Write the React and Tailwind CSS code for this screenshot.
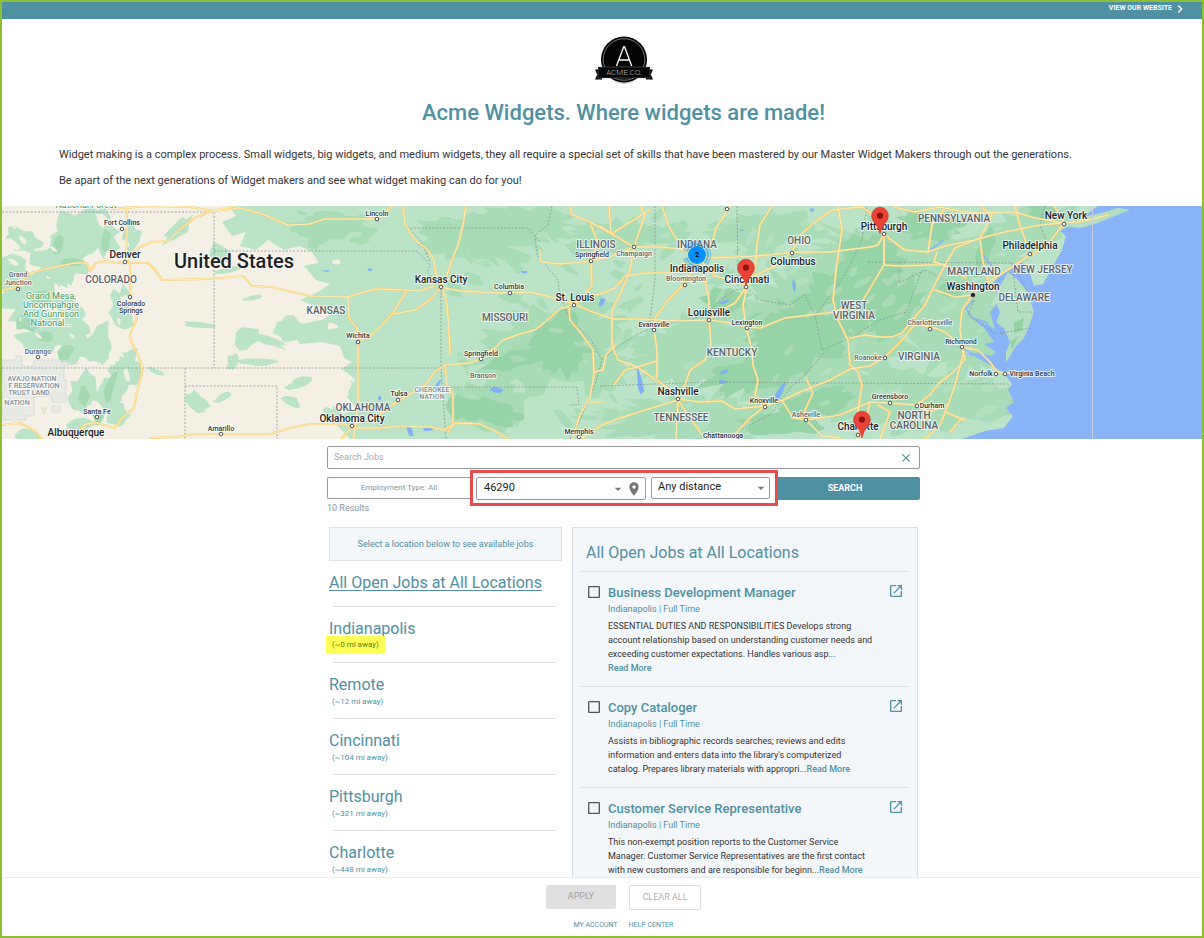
import React from "react";
import { MdOpenInNew, MdLocationOn, MdClose, MdArrowDropDown, MdChevronRight, MdCheckBoxOutlineBlank } from "react-icons/md";

/* ---------- map data ---------- */

// Small deterministic generator so that the terrain is the same on every load.
function makeRandom(seed) {
  let s = seed;
  return () => {
    s = (s * 16807) % 2147483647;
    return s / 2147483647;
  };
}

function blobPath(cx, cy, rx, ry, angle, rnd) {
  const n = Math.max(9, Math.round((rx + ry) / 2.2));
  const a = (angle * Math.PI) / 180;
  let d = "";
  for (let i = 0; i < n; i++) {
    const t = (i / n) * Math.PI * 2;
    const k = 0.62 + rnd() * 0.5;
    const x = Math.cos(t) * rx * k;
    const y = Math.sin(t) * ry * k;
    const px = cx + x * Math.cos(a) - y * Math.sin(a);
    const py = cy + x * Math.sin(a) + y * Math.cos(a);
    d += (i ? "L" : "M") + px.toFixed(1) + " " + py.toFixed(1);
  }
  return d + "Z";
}

function scatter(seed, count, x0, y0, w, h, size, angle) {
  const rnd = makeRandom(seed);
  const out = [];
  for (let i = 0; i < count; i++) {
    const cx = x0 + rnd() * w;
    const cy = y0 + rnd() * h;
    const r = size * (0.4 + rnd());
    out.push(blobPath(cx, cy, r * 1.7, r * 0.7, angle + rnd() * 50 - 25, rnd));
  }
  return out.join("");
}

function blobs(seed, list) {
  const rnd = makeRandom(seed);
  return list.map(([cx, cy, rx, ry, a]) => blobPath(cx, cy, rx, ry, a || 0, rnd)).join("");
}

const PLAINS =
  "M228 206L236 216L222 222L232 236L246 232L240 246L256 250L268 240L284 250L300 246L312 252L318 262L304 266L316 280L330 284L318 292L300 300L314 306L334 312L322 320L300 324L292 334L300 344L322 342L340 346L344 358L352 362L340 370L352 384L346 396L356 408L344 414L330 404L322 410L336 424L350 439L1204 439L1204 206Z";

const WEST_GREEN = blobs(11, [
  [75, 235, 26, 30, 20], [62, 262, 34, 26, -20], [100, 232, 22, 26, 0], [36, 300, 34, 32, 10],
  [22, 240, 22, 12, 20], [62, 318, 32, 26, 40], [40, 340, 26, 14, 0], [122, 308, 14, 24, 0],
  [98, 345, 14, 24, 20], [125, 372, 16, 26, 20], [108, 395, 14, 26, 20], [82, 392, 14, 22, 10],
  [74, 345, 18, 22, 0], [118, 415, 12, 14, 0], [132, 238, 12, 14, 0], [14, 275, 16, 24, 0],
  [28, 436, 14, 8, 0], [80, 425, 14, 8, 0], [178, 230, 22, 8, -45], [198, 325, 18, 4, 6], [245, 336, 14, 14, 0],
  [232, 362, 6, 10, 20], [252, 298, 10, 3, -10], [198, 402, 16, 9, 40], [222, 398, 10, 4, -30],
  [266, 340, 24, 5, 20], [258, 362, 20, 5, 0], [300, 382, 16, 6, -20], [292, 402, 12, 6, 30],
  [155, 371, 10, 3, 20], [228, 270, 14, 3, -10], [218, 254, 14, 10, 30], [290, 330, 18, 14, 20],
]);
const WEST_DARK = blobs(23, [
  [58, 245, 8, 12, 0], [26, 322, 14, 10, 0], [44, 336, 10, 7, 0], [110, 388, 5, 20, 20], [72, 262, 12, 5, 0],
  [106, 240, 6, 12, 10], [84, 395, 6, 12, 0], [66, 352, 8, 12, 30], [98, 418, 6, 8, 0], [40, 296, 12, 8, 0],
]);
const EAST_MID = blobs(37, [
  [470, 240, 60, 26, 10], [520, 225, 60, 22, 0], [545, 345, 84, 42, -20], [490, 405, 46, 30, 0],
  [620, 235, 60, 16, 0], [700, 350, 80, 40, -10], [760, 230, 60, 22, 0], [820, 330, 130, 80, -20],
  [900, 260, 120, 46, 0], [960, 330, 60, 54, 0], [1030, 230, 50, 26, -20], [900, 400, 110, 34, 0],
  [690, 420, 110, 24, 0], [330, 225, 40, 14, 0], [990, 400, 34, 20, 0], [600, 370, 30, 30, 0],
]);
const EAST_DARK = blobs(53, [
  [560, 345, 36, 34, 0], [515, 360, 34, 10, -20], [490, 412, 38, 14, 10], [458, 405, 12, 14, 0],
  [800, 335, 66, 40, -20], [845, 300, 40, 40, 0], [870, 260, 36, 30, 0], [760, 372, 60, 20, -15],
  [930, 226, 36, 16, 0], [895, 310, 26, 40, 30], [812, 405, 50, 16, -15], [985, 250, 8, 26, 20], [725, 300, 26, 16, 0],
  [1045, 212, 20, 8, 0], [950, 290, 14, 10, 0], [780, 425, 44, 12, 0],
]);
const MID_TEXTURE =
  scatter(71, 50, 452, 210, 170, 220, 6, 30) + scatter(73, 70, 620, 210, 260, 220, 7, -30) + scatter(79, 14, 300, 212, 80, 40, 6, 0);
const LIGHT_TEXTURE = scatter(83, 90, 600, 210, 400, 224, 5, -35) + scatter(89, 24, 440, 210, 150, 220, 5, 20);
const BEIGE_TEXTURE =
  scatter(97, 40, 8, 212, 130, 200, 4, 60) + "M302 258L316 258L318 263L308 265Z" +
  blobs(99, [[308, 285, 10, 6, 10], [336, 262, 5, 3, 0], [332, 326, 6, 4, 0], [318, 352, 16, 7, 10], [336, 372, 20, 6, 30], [318, 398, 20, 8, 25], [342, 392, 10, 4, 30], [312, 430, 18, 8, 10]]);
const WATER_SPECKS = blobs(101, [
  [410, 432, 7, 3, 70], [428, 429, 6, 2, 0], [438, 384, 5, 2, -60], [498, 390, 8, 3, 10], [508, 318, 8, 2, -20], [524, 272, 4, 1.5, 0],
  [640, 382, 3, 16, -10], [602, 302, 3, 5, 30], [722, 382, 5, 2, 0], [724, 372, 5, 2, -20], [780, 392, 3, 11, 30], [794, 286, 2, 8, 0],
  [724, 302, 6, 2, -20], [370, 270, 3, 1.5, 0], [326, 271, 4, 1, 0], [812, 210, 3, 2, 0], [742, 230, 3, 1, 0], [380, 398, 2, 3, 0],
]);

const OCEAN =
  "M1098 206L1202 206L1202 439L962 439L985 431L1004 428L1013 416L1006 408L1014 402L1008 390L1012 384L1006 376L996 368L986 362L974 356L964 354L980 353L992 356L996 352L984 344L994 342L984 328L972 318L990 326L995 330L990 312L1000 300L992 284L1000 276L1012 268L1022 262L1028 268L1034 286L1043 284L1052 268L1062 250L1066 236L1060 231L1070 226Z";
const PENINSULA = "M1008 272L1016 278L1028 292L1032 306L1034 312L1030 324L1024 338L1016 346L1010 356L1006 362L1006 352L1010 342L1004 328L996 322L1000 312L994 298L1000 286Z";
const LONG_ISLAND = "M1064 226L1078 218L1098 214L1118 208L1130 210L1112 217L1098 223L1080 228Z";
const POTOMAC = "M974 300L966 308L972 318L986 322L994 334M982 254L992 266L1000 282M962 348L980 358L996 368M944 240L930 250";

const ROADS = [
  "127,206 127,235 126,260 130,262 130,297 137,318 130,335 131,341 141,362 142,373 137,392 134,408 122,418 115,428 97,423 85,424 74,438",
  "2,290 18,287 30,273 50,268 75,263 87,263 90,271 96,263 105,261 118,263 148,263 155,270 162,280 210,279 243,276 252,286 272,287 310,296 347,297 375,289 407,290 420,291 434,286",
  "130,257 140,247 152,242 168,241 180,229 195,218 212,211 235,206",
  "110,209 150,206 190,207 215,211 240,208 262,214 288,225 310,224 325,219 376,219 393,206",
  "2,425 20,423 35,431 42,439",
  "150,438 175,437 195,434 222,434 270,434 290,428 310,424 345,424 352,428 380,428 400,426 430,427 445,430 455,423 480,424 495,431 508,439",
  "403,206 405,224 415,240 428,250 434,260 436,275 441,287",
  "466,206 463,225 458,245 452,260 447,275 441,287 460,291 500,293 530,292 555,298 574,304",
  "441,287 430,300 415,310 393,314", "407,290 393,313 375,332 358,342",
  "348,297 349,318 357,328 358,342 358,400 356,424 353,439", "352,427 341,439",
  "443,290 447,305 449,330 450,355",
  "574,304 560,309 545,322 535,330 520,334 503,340 495,348 480,359 470,363 445,365 435,372 425,385 400,400 375,417 352,425",
  "445,365 447,385 453,395 453,425 448,432",
  "571,206 571,214 590,222 608,232", "591,225 598,243 591,261 592,285 586,293 574,304",
  "540,250 541,262 560,264 591,261 612,256 634,247 660,247 680,249 697,256 715,276 740,282 746,286",
  "569,308 570,320 580,332 593,350 594,375 590,397 580,415 572,439", "594,372 603,370 606,355 615,345", "590,402 602,402",
  "574,304 590,311 613,319 640,319 680,321 709,320 725,322 747,327 760,328 785,318 835,312 850,304",
  "576,303 590,296 603,293 615,288 625,276 645,273 670,273 697,258 740,257 770,255 792,252 830,252 870,247 878,245 884,234",
  "662,206 668,225 680,245 697,256", "728,210 716,228 713,240", "730,206 728,210",
  "600,226 612,234 634,247 630,270 622,290 612,310 612,345 618,360 637,367 657,361", "609,206 611,234 650,210", "640,206 645,215 634,247",
  "697,256 705,280 709,300 709,320 711,345 705,360 690,370 685,385 678,398",
  "747,286 743,305 746,327 752,350 753,365 758,380 755,395 765,406 750,418 735,434",
  "709,320 722,310 735,303 747,286 752,277 775,266 792,252 800,235 815,222 832,210 850,208 862,207 880,220",
  "772,206 760,225 757,245 755,270 747,286",
  "838,206 842,230 836,270 833,300 838,320 848,340 850,365 858,372 862,385 858,410 858,439",
  "850,338 865,335 880,337 892,337 902,333 925,305 935,284 945,265 955,248 980,238",
  "765,406 783,400 800,392 830,380 850,369 870,366 885,357 902,340 915,324 935,328 945,332 962,346",
  "678,399 700,402 722,401 735,409 765,406", "783,402 793,418 806,420 840,415 870,402 890,403 916,405 930,412 948,405",
  "806,378 813,393 805,410 806,420 822,436 840,438", "884,265 875,280 863,300", "884,234 884,265 900,266 930,265 945,265",
  "678,400 655,407 620,418 602,425 580,439", "678,400 676,439", "678,400 695,425 705,439",
  "654,330 657,350 657,378", "654,330 655,318 668,300 685,283 697,262", "614,385 625,370 637,367 668,388 678,398",
  "894,242 905,250 928,252 945,246 975,240 1000,233 1040,225 1064,223", "894,207 915,212 940,207 965,212 990,213 1015,212 1035,218 1064,223",
  "980,240 983,262 988,280", "937,252 934,262 945,265 966,278", "928,252 932,225 945,208",
  "1064,223 1055,235 1045,248 1030,255 1015,265 1000,275 988,282 974,293 962,310 960,330 962,346 965,360 950,375 940,382 930,395 916,405",
  "962,347 978,350 990,362 997,372 1010,373", "963,355 955,385 948,405 940,425 925,439", "1015,206 1020,225 1027,245",
  "935,290 955,297 974,295", "1064,223 1085,221 1108,215", "1054,206 1060,215 1064,223", "980,206 992,215 980,238",
  "945,412 965,420 962,418 950,432", "884,234 895,243 905,250", "870,402 866,420 858,439", "878,405 890,412 880,439",
];

const BORDERS = [
  "2,212 214,212 214,368", "214,251 417,251 430,265 427,272 441,287 441,370 446,439", "2,368 441,368",
  "185,368 185,439", "185,386 277,386 277,439", "407,228 528,228 540,242", "446,387 577,387 579,405 569,405",
  "552,206 548,225 535,235 537,255 558,280 560,295 570,320 590,338 602,360 595,385 580,420 570,439",
  "602,360 620,345 640,333 660,325 690,320 709,312 720,300 735,290 747,288 760,300 790,305 805,295 815,315 835,290 850,265 862,240 867,206",
  "655,206 655,280 650,320", "737,206 738,286", "868,262 1012,263 1018,312 1034,312",
  "600,386 710,382 830,383 1010,384", "899,262 899,283 925,270 945,280 968,292", "824,353 805,375 790,388 770,415 740,430",
  "815,315 822,350 850,338 880,320 906,312 922,270", "1012,263 1032,300", "403,206 405,224 420,240 430,262",
  "974,300 968,315 996,334 1030,328", "1045,206 1040,225 1050,250",
];

// [text, centre x, baseline y]
const BIG = [
  ["Denver", 125, 258], ["Kansas City", 441, 283], ["St. Louis", 575, 301], ["Oklahoma City", 352, 422], ["Albuquerque", 76, 436],
  ["Indianapolis", 697, 272], ["Columbus", 793, 265], ["Cincinnati", 747, 283], ["Louisville", 709, 316], ["Nashville", 678, 395],
  ["Pittsburgh", 884, 230], ["New York", 1066, 219], ["Philadelphia", 1030, 249], ["Washington", 973, 290], ["Charlotte", 858, 430],
];
const SMALL = [
  ["Fort Collins", 122, 225], ["Colorado", 131, 306], ["Springs", 131, 313], ["Lincoln", 377, 216], ["Columbia", 509, 289],
  ["Springfield", 592, 257], ["Wichita", 358, 338], ["Springfield", 481, 356], ["Tulsa", 399, 396], ["Memphis", 579, 434],
  ["Amarillo", 221, 431], ["Santa Fe", 97, 414], ["Evansville", 654, 327], ["Lexington", 747, 325], ["Knoxville", 764, 403],
  ["Chattanooga", 723, 438], ["Richmond", 961, 344], ["Virginia Beach", 1032, 376], ["Norfolk", 981, 376], ["Greensboro", 890, 399],
  ["Durham", 932, 408],
];
const FAINT = [
  ["Grand", 18, 277], ["Junction", 18, 285], ["Durango", 38, 354], ["Branson", 483, 378], ["Champaign", 634, 256],
  ["Bloomington", 686, 281], ["Roanoke", 868, 360], ["Asheville", 806, 417], ["Charlottesville", 930, 325],
];
const STATES = [
  ["COLORADO", 111, 283], ["KANSAS", 326, 314], ["MISSOURI", 505, 321], ["OKLAHOMA", 363, 411], ["ILLINOIS", 596, 248],
  ["INDIANA", 697, 248], ["OHIO", 799, 244], ["KENTUCKY", 732, 356], ["TENNESSEE", 681, 421], ["PENNSYLVANIA", 954, 222],
  ["MARYLAND", 974, 275], ["NEW JERSEY", 1043, 273], ["DELAWARE", 1024, 301], ["WEST", 854, 309], ["VIRGINIA", 854, 319],
  ["VIRGINIA", 919, 360], ["NORTH", 914, 419], ["CAROLINA", 914, 429],
];
const NATIONS = [
  ["AVAJO NATION", 32, 381], ["F RESERVATION", 34, 388], ["TRUST LAND", 29, 395], ["NATION", 17, 405], ["CHEROKEE", 432, 392], ["NATION", 432, 399],
];
const PARKS = [
  ["National Forest", 86, 208], ["Grand Mesa,", 51, 299], ["Uncompahgre", 51, 308], ["And Gunnison", 51, 317], ["National...", 51, 326],
];
const DOTS = [
  [122, 229], [125, 262], [18, 289], [130, 297], [38, 357], [97, 417], [76, 439], [221, 434], [377, 219], [441, 287], [510, 293], [574, 305],
  [591, 261], [358, 342], [481, 359], [398, 400], [352, 426], [579, 437], [634, 247], [685, 285], [792, 253], [746, 287], [709, 320],
  [654, 330], [747, 328], [678, 399], [765, 407], [806, 420], [884, 234], [858, 435], [727, 209], [1064, 224], [1030, 254], [930, 329],
  [962, 347], [996, 374], [1005, 374], [917, 406], [890, 403], [885, 358],
];

function Labels({ items, className }) {
  return (
    <g className={className} textAnchor="middle" stroke="#ffffff" strokeOpacity="0.75" strokeWidth="2" paintOrder="stroke" strokeLinejoin="round">
      {items.map(([t, x, y], i) => (
        <text key={i} x={x} y={y}>{t}</text>
      ))}
    </g>
  );
}

function Pin({ x, y }) {
  return (
    <g transform={`translate(${x} ${y})`}>
      <path d="M0 0C-1.4-5.2-2.6-8-5.4-11.2C-7.4-13.5-8.4-15.6-8.4-18.4A8.4 8.4 0 0 1 8.4-18.4C8.4-15.6 7.4-13.5 5.4-11.2C2.6-8 1.4-5.2 0 0Z" fill="#ea4335" stroke="#c5221f" strokeWidth="0.5" />
      <circle cx="0" cy="-18.4" r="3.1" fill="#8b1410" />
    </g>
  );
}

function JobsMap() {
  return (
    <svg viewBox="2 206 1200 233" preserveAspectRatio="xMidYMid slice" className="block h-[233px] w-full font-medium" role="img" aria-label="Map of job locations">
      <rect x="2" y="206" width="1200" height="233" fill="#f5f0e5" />
      <path d={PLAINS} fill="#bbe3c8" />
      <path d={WEST_GREEN} fill="#bbe3c8" />
      <path d={WEST_DARK} fill="#a4d9b4" />
      <path d={EAST_MID + MID_TEXTURE} fill="#a8dbb8" />
      <path d={EAST_DARK} fill="#97d3a9" />
      <path d={LIGHT_TEXTURE} fill="#bbe3c8" fillOpacity="0.5" />
      <path d={BEIGE_TEXTURE} fill="#f5f0e5" />
      <g fill="#dbe6e2" stroke="#cbd3d2" strokeWidth="0.6" fillOpacity="0.5">
        <path d="M2 360H16V356H22V366H34V360H68V366H64V380H66V402H52V396H34V416H26V420H2Z" />
        <path d="M42 408L47 408L44 414ZM52 406H60V412H52ZM66 428H88V434H66Z" />
      </g>
      <path d={WATER_SPECKS} fill="#7fb0f5" />
      <path d={OCEAN} fill="#8ab4f8" />
      <path d={PENINSULA + LONG_ISLAND} fill="#b4dfc2" />
      <path d="M1014 322L1024 318L1022 330L1014 334ZM1010 342L1018 336L1012 350Z" fill="#94d2a6" />
      <path d={POTOMAC} fill="none" stroke="#8ab4f8" strokeWidth="1.6" />
      <g fill="none" stroke="#84958f" strokeWidth="0.8" strokeDasharray="2 1.6">
        {BORDERS.map((p, i) => <polyline key={i} points={p} />)}
      </g>
      <g fill="none" stroke="#f7cf74" strokeWidth="2.2" strokeLinejoin="round" strokeLinecap="round">
        {ROADS.map((p, i) => <polyline key={i} points={p} />)}
      </g>
      <g fill="none" stroke="#ffeebb" strokeWidth="1" strokeLinejoin="round" strokeLinecap="round">
        {ROADS.map((p, i) => <polyline key={i} points={p} />)}
      </g>
      <path d="M1092.5 206V439" stroke="#c9cfe0" strokeWidth="1" />
      <g fill="#ffffff" stroke="#4d5156" strokeWidth="1">
        {DOTS.map(([x, y], i) => <circle key={i} cx={x} cy={y} r="1.8" />)}
      </g>
      <circle cx="973" cy="295" r="2.6" fill="#202124" stroke="#ffffff" strokeWidth="0.6" />
      <Labels items={PARKS} className="fill-[#3f9a5e] text-[9px] font-normal" />
      <Labels items={STATES} className="fill-[#5b6166] text-[10px]" />
      <Labels items={NATIONS} className="fill-[#858b90] text-[7px]" />
      <Labels items={FAINT} className="fill-[#5f6368] text-[7px]" />
      <Labels items={SMALL} className="fill-[#2f3337] text-[7px]" />
      <Labels items={BIG} className="fill-[#202124] text-[10px]" />
      <Labels items={[["United States", 234, 268]]} className="fill-[#202124] text-[20px]" />
      <g fill="none" stroke="#0090ff">
        <circle cx="697" cy="255" r="13.5" strokeOpacity="0.3" strokeWidth="1.8" strokeDasharray="21.2 7.074" strokeDashoffset="10.6" />
        <circle cx="697" cy="255" r="11" strokeOpacity="0.5" strokeWidth="1.8" strokeDasharray="17.3 5.74" strokeDashoffset="8.6" />
      </g>
      <circle cx="697" cy="255" r="9" fill="#0090ff" />
      <text x="697" y="257" textAnchor="middle" className="fill-black text-[7px] font-bold">2</text>
      <Pin x={746} y={286} />
      <Pin x={880} y={234} />
      <Pin x={862} y={438} />
    </svg>
  );
}

function Logo() {
  return (
    <svg viewBox="0 0 60 50" className="h-[50px] w-[60px]" role="img" aria-label="Acme Co.">
      <ellipse cx="30" cy="25.5" rx="19.5" ry="23.5" fill="#c9c9c9" />
      <circle cx="30" cy="24.5" r="23" fill="#050505" />
      <circle cx="30" cy="24.5" r="20.8" fill="none" stroke="#8c8c8c" strokeWidth="0.8" />
      <path d="M22.5 31L29.6 12H30.6L37.7 31M25 25H35.2" fill="none" stroke="#ffffff" strokeWidth="1.3" />
      <path d="M1 34.5H8V44.5H1L3.2 39.5ZM59 34.5H52V44.5H59L56.8 39.5Z" fill="#050505" />
      <path d="M4 32H56V43H4Z" fill="#050505" stroke="#8a8a8a" strokeWidth="0.4" />
      <text x="30" y="40" textAnchor="middle" className="fill-[#b8b8b8] text-[8px] font-light">ACME CO.</text>
    </svg>
  );
}

/* ---------- page data ---------- */

const LOCATIONS = [
  { city: "Indianapolis", away: "(~0 mi away)", marked: true },
  { city: "Remote", away: "(~12 mi away)" },
  { city: "Cincinnati", away: "(~104 mi away)" },
  { city: "Pittsburgh", away: "(~321 mi away)" },
  { city: "Charlotte", away: "(~448 mi away)" },
];

const JOBS = [
  {
    title: "Business Development Manager",
    text: "ESSENTIAL DUTIES AND RESPONSIBILITIES Develops strong account relationship based on understanding customer needs and exceeding customer expectations. Handles various asp...",
  },
  {
    title: "Copy Cataloger",
    text: "Assists in bibliographic records searches; reviews and edits information and enters data into the library's computerized catalog. Prepares library materials with appropri...",
  },
  {
    title: "Customer Service Representative",
    text: "This non-exempt position reports to the Customer Service Manager. Customer Service Representatives are the first contact with new customers and are responsible for beginn...",
  },
];

function Job({ title, text }) {
  const id = title.toLowerCase().replaceAll(" ", "-");
  return (
    <li className="flex items-start gap-1.5 border-t border-[#dcdfe1] pt-3 pr-[5px] pb-[11px] pl-[5px]">
      <span className="relative size-4 shrink-0 text-[#555]">
        <input id={id} type="checkbox" className="absolute inset-0 size-4 opacity-0" />
        <MdCheckBoxOutlineBlank className="size-4" />
      </span>
      <div className="min-w-0 flex-1">
        <div className="flex h-[18px] items-start justify-between">
          <label htmlFor={id} className="text-[13px] leading-[18px] font-medium">{title}</label>
          <a href="#job" aria-label={"Open " + title} className="-mt-px"><MdOpenInNew className="size-4" /></a>
        </div>
        <p className="pt-px text-[9px] leading-[13px]">Indianapolis | Full Time</p>
        <p className="mt-[3px] max-w-[266px] text-[9px] leading-[14px] text-[#333]">
          {text}<wbr /><a href="#job" className="font-medium whitespace-nowrap text-[#4f90a2]">Read More</a>
        </p>
      </div>
    </li>
  );
}

export default function App() {
  return (
    <div className="flex h-screen flex-col overflow-hidden border-2 border-[#8dbf34] bg-white font-['Roboto',sans-serif] text-[#4f90a2]">
      <header className="flex h-[17px] shrink-0 items-center justify-end bg-[#4f90a2] pr-3.5 text-white">
        <a href="#website" className="flex items-center text-[7px] leading-3 font-bold">
          <span className="-mt-1.5">VIEW OUR WEBSITE</span>
          <MdChevronRight className="-mt-1 size-4" />
        </a>
      </header>

      <main className="min-h-0 flex-1 overflow-hidden">
        <section className="pt-4 pr-[13px] pb-[17px] pl-14">
          <div className="flex justify-center"><Logo /></div>
          <h1 className="mt-3 text-center text-[22px] leading-8 font-medium">Acme Widgets. Where widgets are made!</h1>
          <div className="mt-[18px] space-y-2.5 px-px text-[11px] leading-4 text-[#333]">
            <p>Widget making is a complex process. Small widgets, big widgets, and medium widgets, they all require a special set of skills that have been mastered by our Master Widget Makers through out the generations.</p>
            <p>Be apart of the next generations of Widget makers and see what widget making can do for you!</p>
          </div>
        </section>

        <JobsMap />

        <section className="pt-[7px] pr-[13px] pl-14">
          <div className="mx-auto max-w-[593px]">
            <form onSubmit={(e) => e.preventDefault()}>
              <div className="flex h-[23px] items-center rounded-xs border border-[#999] px-1.5">
                <input type="text" aria-label="Search Jobs" placeholder="Search Jobs" className="min-w-0 flex-1 bg-transparent pt-px text-[9px] outline-none placeholder:text-[#a9a9a9]" />
                <button type="button" aria-label="Clear search"><MdClose className="size-[14px]" /></button>
              </div>
              <div className="mt-2 flex h-[23px]">
                <button type="button" className="mr-1.5 h-[22px] w-[143px] rounded-l-xs border border-r-0 border-[#999] text-[8px] text-[#8496a2]">Employment Type: All</button>
                <div className="relative flex gap-[5px] text-[11px] text-[#222]">
                  <div className="flex w-[170px] items-center rounded-xs border border-[#999] pr-[3px] pl-[7px]">
                    <input type="text" aria-label="Zip code" defaultValue="46290" className="min-w-0 flex-1 bg-transparent outline-none" />
                    <MdArrowDropDown className="size-4 text-[#777]" />
                    <MdLocationOn className="size-4 text-[#777]" />
                  </div>
                  <div className="relative h-[22px] w-[119px]">
                    <select aria-label="Distance" className="block h-full w-full appearance-none rounded-xs border border-[#999] bg-transparent pb-px pl-1.5 outline-none">
                      <option>Any distance</option>
                    </select>
                    <MdArrowDropDown className="pointer-events-none absolute top-[3px] right-px size-4 text-[#777]" />
                  </div>
                  <div className="pointer-events-none absolute -top-[7px] -right-2 -bottom-1.5 -left-1.5 border-3 border-[#e84c4c]" />
                </div>
                <button type="submit" className="ml-2 flex-1 rounded-r-xs bg-[#4f90a2] pr-2 text-[9px] font-bold text-white">SEARCH</button>
              </div>
            </form>
            <p className="mt-px text-[9px] leading-[14px] text-[#8496a2]">10 Results</p>

            <div className="mt-3 grid grid-cols-[233px_1fr] gap-2.5 px-0.5">
              <nav>
                <p className="flex h-[34px] items-center justify-center border border-[#dcdfe1] bg-[#f3f7fa] pt-0.5 text-[9px]">Select a location below to see available jobs</p>
                <a href="#all" className="mt-3 block text-base leading-5 underline underline-offset-2">All Open Jobs at All Locations</a>
                <ul className="mt-[13px]">
                  {LOCATIONS.map((l) => (
                    <li key={l.city} className="h-[56px]">
                      <div className="mr-1.5 ml-1 border-t border-[#dcdfe1]" />
                      <a href="#location" className="block pt-[13px] text-base leading-[18px]">{l.city}</a>
                      <span className={l.marked ? "-mt-0.5 -ml-[3px] inline-block bg-[#ffff55] px-1.5 text-[8px] leading-[18px] text-[#4b8a1e] align-top" : "ml-[3px] inline-block text-[8px] leading-4 align-top"}>{l.away}</span>
                    </li>
                  ))}
                </ul>
              </nav>
              <section className="border border-[#dcdfe1] bg-[#f3f7fa] px-2">
                <h2 className="px-[5px] pt-[15px] pb-[9px] text-base leading-[19px]">All Open Jobs at All Locations</h2>
                <ul>
                  {JOBS.map((j) => <Job key={j.title} {...j} />)}
                </ul>
              </section>
            </div>
          </div>
        </section>
      </main>

      <footer className="shrink-0 border-t border-[#ececec] bg-white pt-[7px] pr-[13px] pb-1 pl-14">
        <div className="flex justify-center gap-[13px] text-[9px]">
          <button type="button" disabled className="h-6 w-[70px] rounded-xs bg-[#e0e0e0] text-[#a3a3a3]">APPLY</button>
          <button type="button" className="h-[25px] w-[72px] rounded-xs border border-[#dcdcdc] text-[#b0b0b0]">CLEAR ALL</button>
        </div>
        <div className="mt-2 flex justify-center gap-[11px] text-[7px] leading-[14px]">
          <a href="#account">MY ACCOUNT</a>
          <a href="#help">HELP CENTER</a>
        </div>
      </footer>
    </div>
  );
}
